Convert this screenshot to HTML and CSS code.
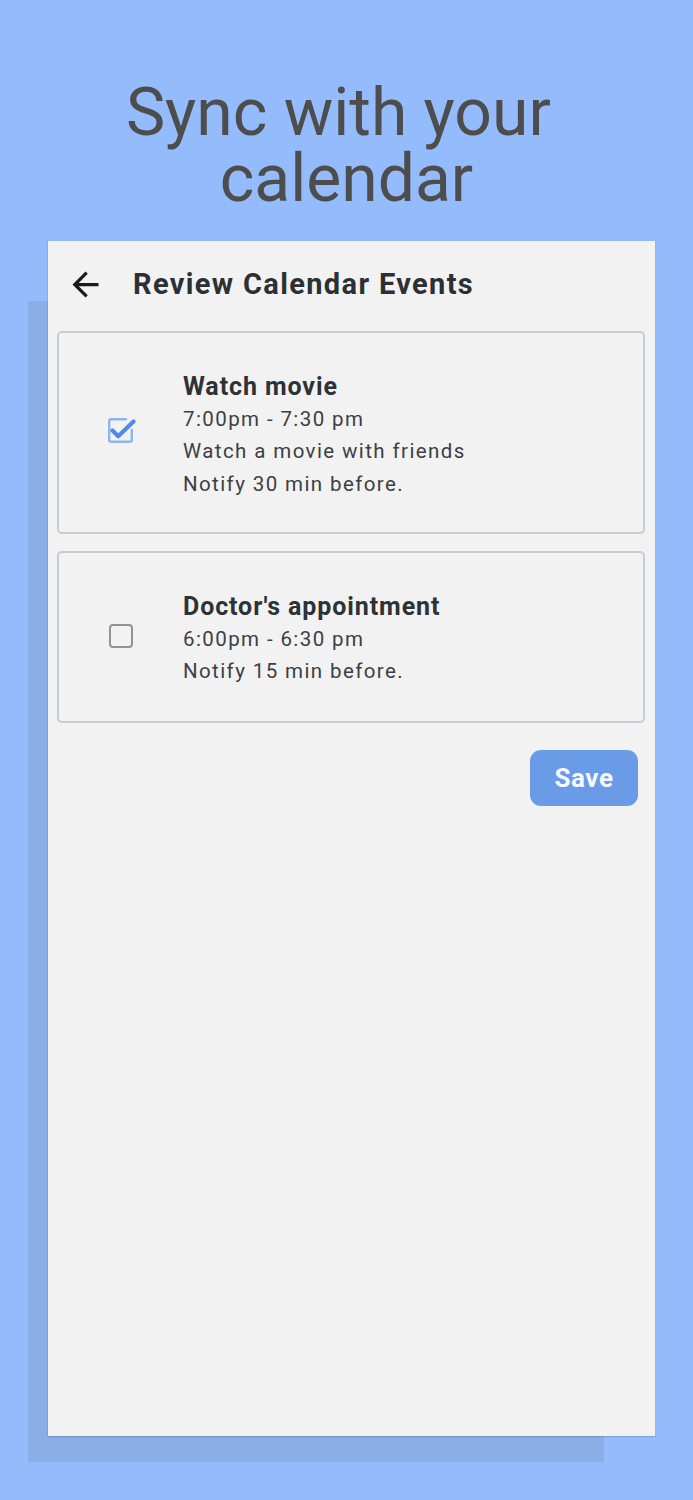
FILE: index.html
```html
<!DOCTYPE html>
<html lang="en">
<head>
<meta charset="utf-8">
<title>Sync with your calendar</title>
<link rel="stylesheet" href="styles.css">
</head>
<body>
<main class="page">
  <h1 class="hero-title">Sync with your calendar</h1>
  <section class="phone">
    <header class="app-bar">
      <svg class="back-icon" viewBox="0 0 24 24" width="39" height="39" aria-hidden="true"><path d="M20 11H7.83l5.59-5.59L12 4l-8 8 8 8 1.41-1.41L7.83 13H20v-2z" fill="#1b1b1b"/></svg>
      <h2 class="app-title">Review Calendar Events</h2>
    </header>
    <div class="events">
      <article class="event">
        <span class="check">
          <svg viewBox="0 0 30 30" width="30" height="30" aria-hidden="true">
            <path d="M20 3.2H5.2Q3.2 3.2 3.2 5.2V23.8Q3.2 25.8 5.2 25.8H23.8Q25.8 25.8 25.8 23.8V14" fill="none" stroke="#8cb5f1" stroke-width="2.4" stroke-linecap="round" stroke-linejoin="round"/>
            <path d="M6.5 14.5L12.2 20.2L27.5 5.6" fill="none" stroke="#4f8ae8" stroke-width="4.2" stroke-linecap="round" stroke-linejoin="round"/>
          </svg>
        </span>
        <div class="event-text">
          <h3 class="event-title">Watch movie</h3>
          <p class="event-line">7:00pm - 7:30 pm</p>
          <p class="event-line">Watch a movie with friends</p>
          <p class="event-line">Notify 30 min before.</p>
        </div>
      </article>
      <article class="event event-short">
        <span class="check check-empty"></span>
        <div class="event-text">
          <h3 class="event-title">Doctor's appointment</h3>
          <p class="event-line">6:00pm - 6:30 pm</p>
          <p class="event-line">Notify 15 min before.</p>
        </div>
      </article>
    </div>
    <div class="actions">
      <button class="save-btn" type="button">Save</button>
    </div>
  </section>
</main>
</body>
</html>
```
FILE: styles.css
```css
html, body {
  margin: 0;
  padding: 0;
}
body {
  background: #94bcfc;
  font-family: Roboto, "Noto Sans", "Liberation Sans", sans-serif;
  width: 693px;
  height: 1500px;
  overflow: hidden;
}
.page {
  display: flex;
  flex-direction: column;
  align-items: flex-start;
  padding-top: 80px;
}
.hero-title {
  margin: 0 auto;
  width: 520px;
  text-align: center;
  font-weight: 400;
  font-size: 66px;
  line-height: 66px;
  color: #4d4d4d;
  white-space: break-spaces;
}
.phone {
  position: relative;
  margin: 29px 0 0 48px;
  width: 607px;
  height: 1195px;
  background: #f2f2f2;
  box-shadow: 0 1px 1px rgba(0, 0, 0, 0.12), -1px 0 1px rgba(0, 0, 0, 0.06);
  display: flex;
  flex-direction: column;
}
.phone::before {
  content: "";
  position: absolute;
  left: -20px;
  top: 60px;
  width: 576px;
  bottom: -26px;
  background: #8aaee6;
  z-index: -1;
}
.app-bar {
  height: 90px;
  display: flex;
  align-items: center;
  padding-left: 18px;
  gap: 28px;
}
.back-icon {
  display: block;
  margin-top: -4px;
}
.app-title {
  margin: -5px 0 0 0;
  font-size: 29px;
  font-weight: 700;
  color: #2c3034;
  letter-spacing: 1.35px;
}
.events {
  display: flex;
  flex-direction: column;
  gap: 17px;
  padding: 0 10px 0 9px;
}
.event {
  display: flex;
  align-items: center;
  border: 2px solid #c6ccd3;
  border-radius: 5px;
  padding: 38px 20px 32px 50px;
  gap: 50px;
}
.event-short {
  padding-bottom: 34px;
}
.check {
  width: 24px;
  height: 24px;
  flex: none;
  position: relative;
  margin-bottom: 7px;
}
.check svg {
  position: absolute;
  left: -3px;
  top: -4px;
}
.check-empty {
  box-sizing: border-box;
  border: 2.5px solid #8d949c;
  border-radius: 4px;
}
.event-text {
  display: flex;
  flex-direction: column;
}
.event-title {
  margin: 0;
  font-size: 25px;
  line-height: 32px;
  font-weight: 700;
  color: #2d3236;
  letter-spacing: 0.9px;
}
.event-line {
  margin: 0;
  font-size: 20.5px;
  line-height: 32.3px;
  color: #3c4044;
  letter-spacing: 1.4px;
}
.actions {
  display: flex;
  justify-content: flex-end;
  padding: 27px 17px 0 0;
}
.save-btn {
  width: 108px;
  height: 56px;
  border: none;
  border-radius: 11px;
  background: #6a9be6;
  color: #f6f9ff;
  font-family: Roboto, "Noto Sans", "Liberation Sans", sans-serif;
  font-size: 26px;
  font-weight: 700;
  letter-spacing: 0.6px;
  padding: 0;
}
```
